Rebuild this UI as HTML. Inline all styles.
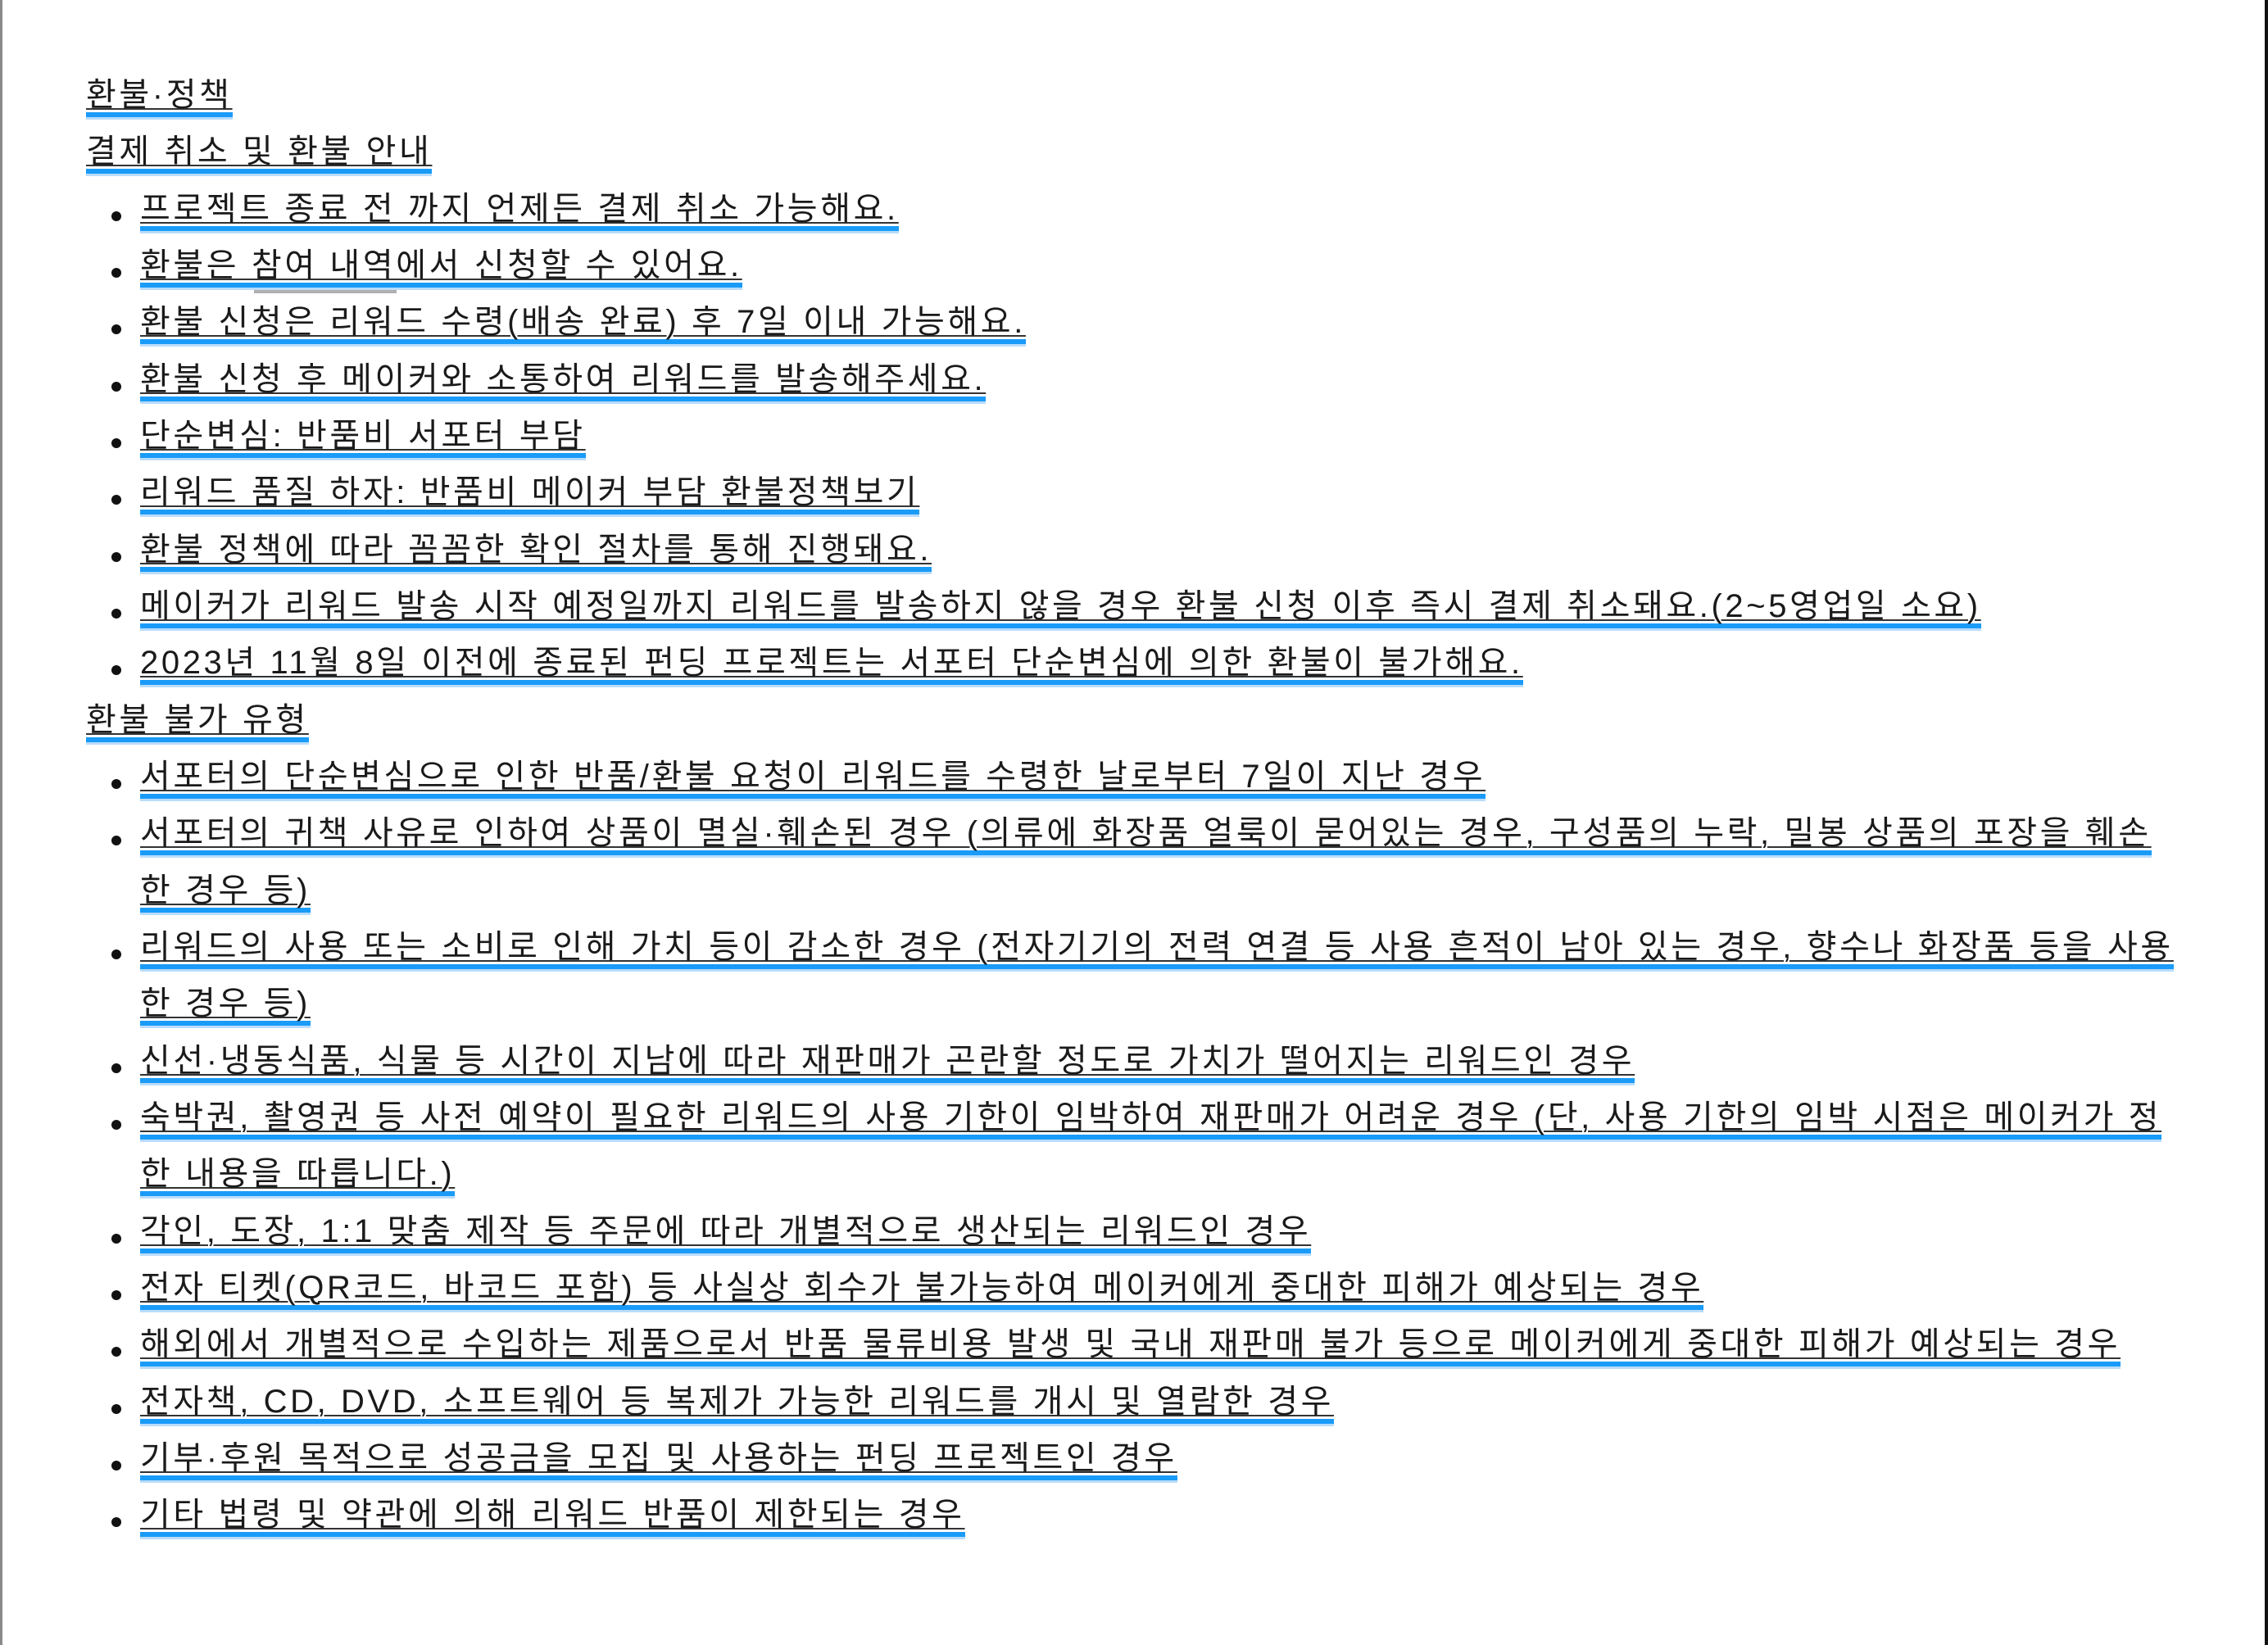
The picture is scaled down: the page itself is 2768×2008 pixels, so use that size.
<!DOCTYPE html>
<html><head><meta charset="utf-8">
<style>
html,body{margin:0;padding:0;background:#fff;}
body{width:2768px;height:2008px;position:relative;overflow:hidden;
font-family:"Liberation Sans","Noto Sans CJK KR",sans-serif;color:#1a1a1a;}
.lb{position:absolute;left:0;top:0;width:3px;height:2008px;background:#8a8a8a;}
.rb{position:absolute;right:0;top:0;width:4px;height:2008px;background:#111;}
.r{position:absolute;white-space:nowrap;height:48px;margin-top:4px;}
.r span{display:inline-block;font-size:40px;line-height:42px;letter-spacing:3.6px;
border-bottom:6px solid #1a9bf8;text-decoration:underline;text-decoration-thickness:2px;text-underline-offset:3px;text-decoration-color:#333;
box-shadow:0 3px 0 #b9dcfb;}
.h{left:105px;}
.b{left:171px;}
.b::before{content:"";position:absolute;left:-35px;top:24px;width:12px;height:12px;border-radius:50%;background:#111;}
.c{left:171px;}
.g{position:absolute;left:310px;top:354px;width:174px;height:4px;background:#b0b0b0;}
</style></head><body>
<div class="lb"></div><div class="rb"></div>
<div class="r h" style="top:91px"><span>환불·정책</span></div>
<div class="r h" style="top:160px"><span>결제 취소 및 환불 안내</span></div>
<div class="r b" style="top:230px"><span>프로젝트 종료 전 까지 언제든 결제 취소 가능해요.</span></div>
<div class="r b" style="top:299px"><span>환불은 참여 내역에서 신청할 수 있어요.</span></div>
<div class="g"></div>
<div class="r b" style="top:368px"><span>환불 신청은 리워드 수령(배송 완료) 후 7일 이내 가능해요.</span></div>
<div class="r b" style="top:438px"><span>환불 신청 후 메이커와 소통하여 리워드를 발송해주세요.</span></div>
<div class="r b" style="top:507px"><span>단순변심: 반품비 서포터 부담</span></div>
<div class="r b" style="top:576px"><span>리워드 품질 하자: 반품비 메이커 부담 환불정책보기</span></div>
<div class="r b" style="top:646px"><span>환불 정책에 따라 꼼꼼한 확인 절차를 통해 진행돼요.</span></div>
<div class="r b" style="top:715px"><span>메이커가 리워드 발송 시작 예정일까지 리워드를 발송하지 않을 경우 환불 신청 이후 즉시 결제 취소돼요.(2~5영업일 소요)</span></div>
<div class="r b" style="top:784px"><span>2023년 11월 8일 이전에 종료된 펀딩 프로젝트는 서포터 단순변심에 의한 환불이 불가해요.</span></div>
<div class="r h" style="top:854px"><span>환불 불가 유형</span></div>
<div class="r b" style="top:923px"><span>서포터의 단순변심으로 인한 반품/환불 요청이 리워드를 수령한 날로부터 7일이 지난 경우</span></div>
<div class="r b" style="top:992px"><span>서포터의 귀책 사유로 인하여 상품이 멸실·훼손된 경우 (의류에 화장품 얼룩이 묻어있는 경우, 구성품의 누락, 밀봉 상품의 포장을 훼손</span></div>
<div class="r c" style="top:1062px"><span>한 경우 등)</span></div>
<div class="r b" style="top:1131px"><span>리워드의 사용 또는 소비로 인해 가치 등이 감소한 경우 (전자기기의 전력 연결 등 사용 흔적이 남아 있는 경우, 향수나 화장품 등을 사용</span></div>
<div class="r c" style="top:1200px"><span>한 경우 등)</span></div>
<div class="r b" style="top:1270px"><span>신선·냉동식품, 식물 등 시간이 지남에 따라 재판매가 곤란할 정도로 가치가 떨어지는 리워드인 경우</span></div>
<div class="r b" style="top:1339px"><span>숙박권, 촬영권 등 사전 예약이 필요한 리워드의 사용 기한이 임박하여 재판매가 어려운 경우 (단, 사용 기한의 임박 시점은 메이커가 정</span></div>
<div class="r c" style="top:1408px"><span>한 내용을 따릅니다.)</span></div>
<div class="r b" style="top:1478px"><span>각인, 도장, 1:1 맞춤 제작 등 주문에 따라 개별적으로 생산되는 리워드인 경우</span></div>
<div class="r b" style="top:1547px"><span>전자 티켓(QR코드, 바코드 포함) 등 사실상 회수가 불가능하여 메이커에게 중대한 피해가 예상되는 경우</span></div>
<div class="r b" style="top:1616px"><span>해외에서 개별적으로 수입하는 제품으로서 반품 물류비용 발생 및 국내 재판매 불가 등으로 메이커에게 중대한 피해가 예상되는 경우</span></div>
<div class="r b" style="top:1686px"><span>전자책, CD, DVD, 소프트웨어 등 복제가 가능한 리워드를 개시 및 열람한 경우</span></div>
<div class="r b" style="top:1755px"><span>기부·후원 목적으로 성공금을 모집 및 사용하는 펀딩 프로젝트인 경우</span></div>
<div class="r b" style="top:1824px"><span>기타 법령 및 약관에 의해 리워드 반품이 제한되는 경우</span></div>
</body></html>
